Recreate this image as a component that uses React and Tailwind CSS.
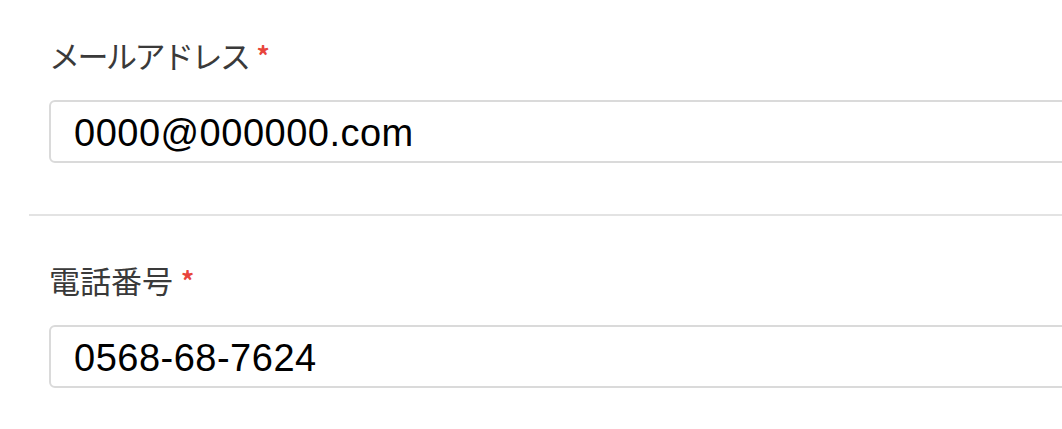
const fields = [
  { label: 'メールアドレス', value: '0000@000000.com', tight: true },
  { label: '電話番号', value: '0568-68-7624' },
]

function Field({ label, value, tight, last }) {
  return (
    <div className={`pl-5 ${last ? 'pt-[44px]' : 'pt-[35px] pb-[51px] border-b-2 border-[#e3e3e3]'}`}>
      <label className="flex items-center text-[31px] leading-[40px] text-[#3a3a3a]" style={{ fontFamily: '"Noto Sans CJK JP", sans-serif' }}>
        <span className={tight ? 'tracking-[-2.5px]' : ''}>{label}</span>
        <span className="ml-[8px] text-[26px] font-bold text-[#e8453c]">*</span>
      </label>
      <div className="mt-[25px] h-[63px] w-[1100px] rounded-[6px] border-2 border-[#dadada] bg-white flex items-center pl-[23px] pt-[3px]">
        <span className="text-[38px] tracking-[0.5px] text-black" style={{ fontFamily: '"Liberation Sans", Arial, sans-serif' }}>{value}</span>
      </div>
    </div>
  )
}

export default function App() {
  return (
    <div className="h-[429px] w-[1062px] overflow-hidden bg-white pl-[29px]">
      {fields.map((f, i) => (
        <Field key={f.label} {...f} last={i === fields.length - 1} />
      ))}
    </div>
  )
}
